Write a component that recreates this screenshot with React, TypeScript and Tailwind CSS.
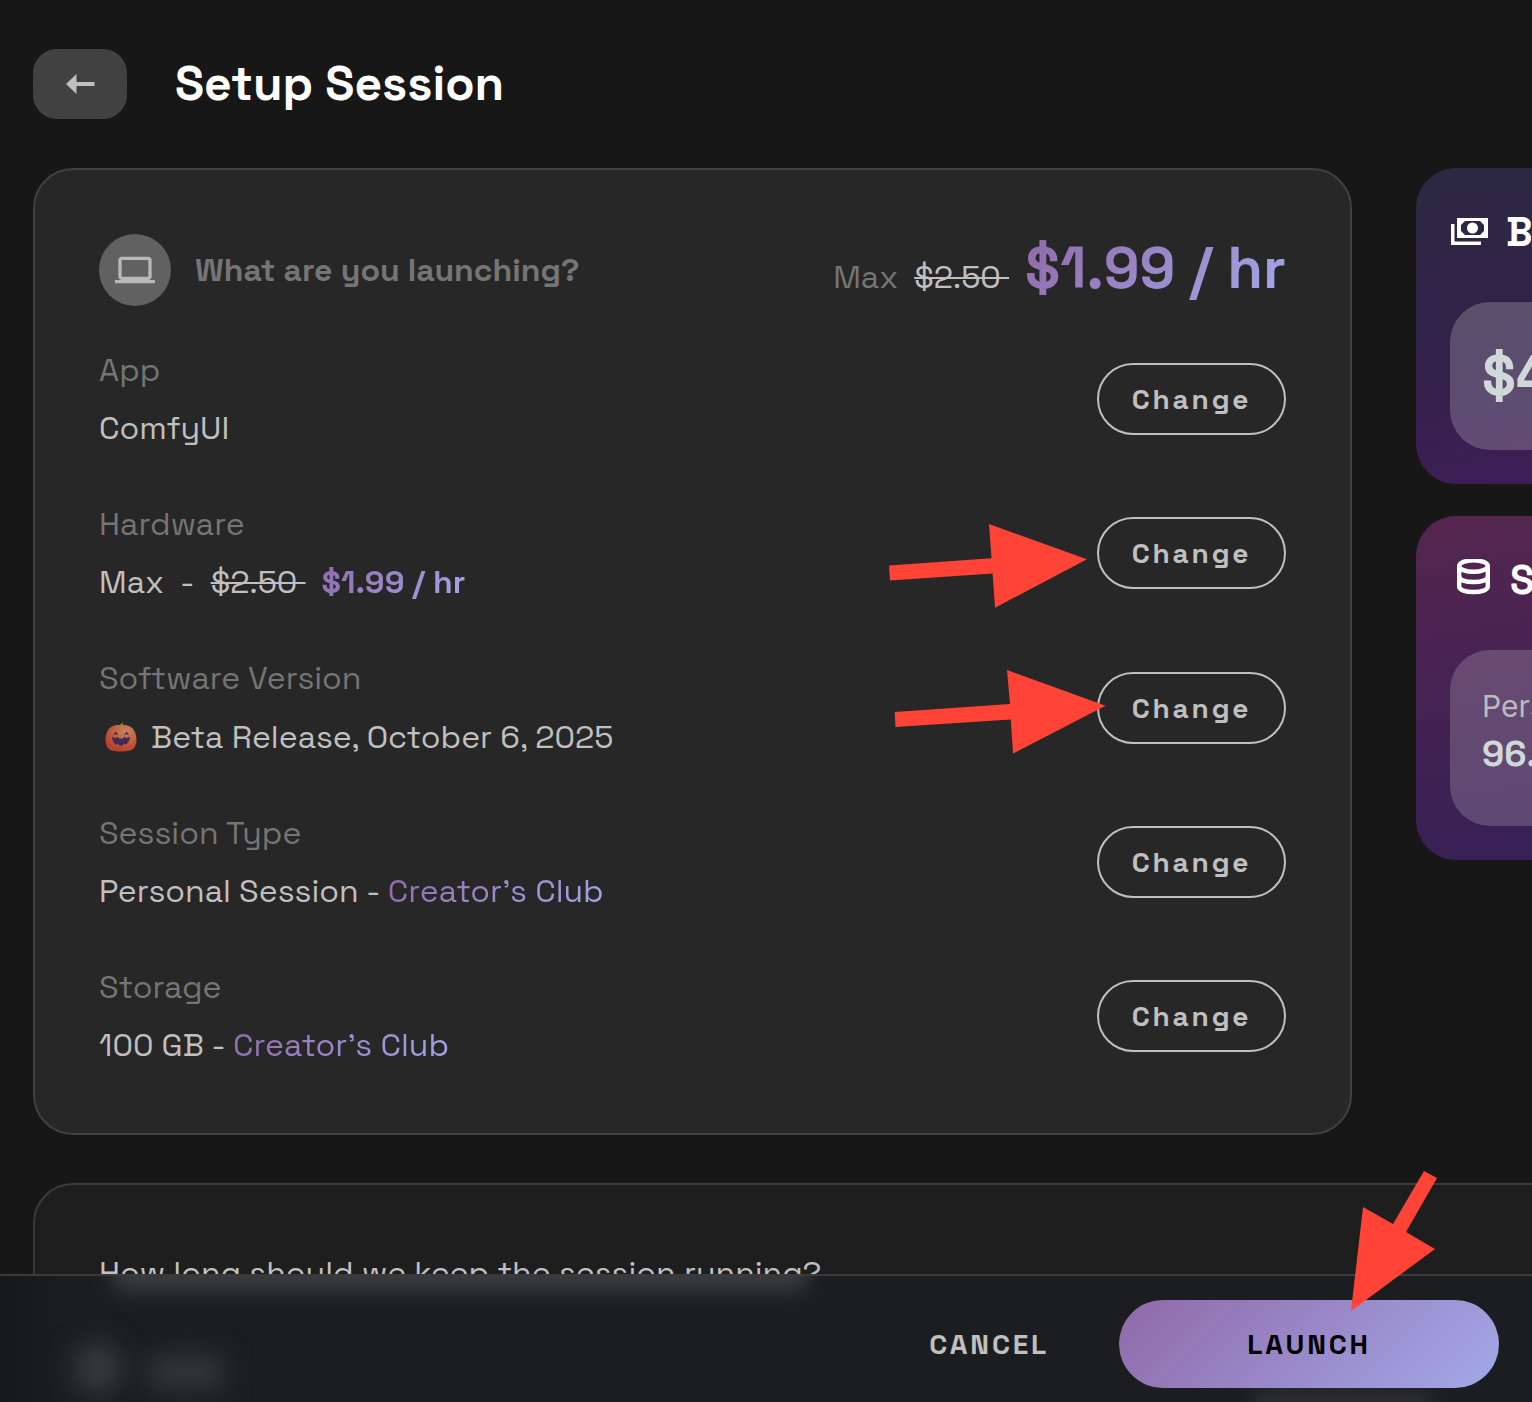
import { MdComputer } from 'react-icons/md';
import type { ReactNode } from 'react';

const gradientText = 'bg-linear-135 from-[#8f69a9] to-[#a2a9e9] bg-clip-text text-transparent';

function Pumpkin() {
  return (
    <svg viewBox="0 0 32 30" className="w-8 h-[30px] shrink-0" aria-hidden="true">
      <defs>
        <radialGradient id="pumpkin" cx="0.65" cy="0.25" r="0.9">
          <stop offset="0" stopColor="#c98460" />
          <stop offset="0.45" stopColor="#bf6040" />
          <stop offset="0.85" stopColor="#b8402e" />
          <stop offset="1" stopColor="#a84b66" />
        </radialGradient>
      </defs>
      <path d="M13 4C14.500 3 16 2 17.800 0L18 4Z" fill="#72863c" />
      <path
        d="M16 3C22 2.600 27 4 29.500 9C32 14 32.500 21 29.500 25.500C27.500 28.800 22 29.500 16 29.500S4.500 28.800 2.500 25.500C-.5 21 0 14 2.500 9C5 4 10 2.600 16 3Z"
        fill="url(#pumpkin)"
      />
      <path d="M8 13L10.800 9.500L13.200 13Q10.600 11.500 8 13ZM19 13L21.500 9.500L24 13Q21.500 11.500 19 13Z" fill="#43285a" />
      <path
        d="M7 14.500L10.500 16.200L12.500 14.800L14.500 16.800H17.500L19.500 14.800L21.500 16.200L25 14.500Q25 20 20.500 22.800L19 21.500L17.500 23.800H14.500L13 21.500L11 22.800Q7 20 7 14.500Z"
        fill="#43285a"
      />
    </svg>
  );
}

function ClubTag() {
  return <span className={gradientText}>Creator’s Club</span>;
}

const rows: { label: string; value: ReactNode; arrow?: ReactNode }[] = [
  { label: 'App', value: 'ComfyUI' },
  {
    label: 'Hardware',
    value: (
      <span className="flex gap-4">
        <span>Max</span>
        <span>-</span>
        <s className="whitespace-pre decoration-2">$2.50 </s>
        <span className={`font-bold ${gradientText}`}>$1.99 / hr</span>
      </span>
    ),
    arrow: (
      <svg
        viewBox="889 524 198 84"
        className="absolute right-[199px] top-6 w-[198px] h-[84px] pointer-events-none"
        aria-hidden="true"
      >
        <path d="M889 565.500L991.500 558.300L989 524L1087 559.300L995 607.700L992.600 573.500L890 580.500Z" fill="#ff4336" />
      </svg>
    ),
  },
  {
    label: 'Software Version',
    value: (
      <span className="flex items-center gap-3.5 h-[49px] pl-1.5">
        <Pumpkin />
        Beta Release, October 6, 2025
      </span>
    ),
    arrow: (
      <svg
        viewBox="894 670 212 84"
        className="absolute right-[180px] top-4 w-[212px] h-[84px] pointer-events-none"
        aria-hidden="true"
      >
        <path d="M894.700 712L1010 704L1007 670L1105.500 705.700L1013 753.500L1010.800 719.500L895.500 727Z" fill="#ff4336" />
      </svg>
    ),
  },
  {
    label: 'Session Type',
    value: (
      <>
        Personal Session - <ClubTag />
      </>
    ),
  },
  {
    label: 'Storage',
    value: (
      <>
        100 GB - <ClubTag />
      </>
    ),
  },
];

function LaunchCard() {
  return (
    <section className="flex-1 min-w-0 rounded-[40px] border-2 border-[#414141] bg-[#272727] p-16">
      <div className="flex items-center justify-between">
        <div className="flex items-center gap-6">
          <span className="flex items-center justify-center w-18 h-18 rounded-full bg-[#616161]">
            <MdComputer className="w-10 h-10 text-[#b8b8b8]" />
          </span>
          <h2 className="text-[32px] leading-12 font-bold text-[#757575]">What are you launching?</h2>
        </div>
        <p className="flex items-baseline gap-4 h-18 text-[32px] text-[#757575]">
          Max
          <s className="whitespace-pre text-[#c0c0c0] decoration-2">$2.50 </s>
          <span className={`text-[58px] leading-17 font-bold ${gradientText}`}>$1.99 / hr</span>
        </p>
      </div>

      <dl className="mt-10 flex flex-col gap-12">
        {rows.map((row) => (
          <div key={row.label} className="relative flex items-center justify-between text-[32px] leading-12">
            <div className="flex flex-col gap-2.5">
              <dt className="text-[#757575]">{row.label}</dt>
              <dd className="text-[#c0c0c0]">{row.value}</dd>
            </div>
            <button
              type="button"
              aria-label={`Change ${row.label}`}
              className="w-[189px] h-18 rounded-full border-2 border-[#c0c0c0] text-[28px] font-bold tracking-widest text-[#c0c0c0]"
            >
              Change
            </button>
            {row.arrow}
          </div>
        ))}
      </dl>
    </section>
  );
}

function Sidebar() {
  return (
    // The side cards are wider than the column and run past the window edge.
    <aside className="w-[116px] shrink-0 flex flex-col gap-8">
      <section className="w-[480px] rounded-[40px] bg-linear-170 from-[#2b2842] via-[#33214a] to-[#431c5c] p-[34px]">
        <h2 className="flex items-center gap-3 h-[62px] text-[40px] font-bold text-white">
          <svg viewBox="0 0 44 44" className="w-11 h-11" fill="currentColor" aria-hidden="true">
            <path fillRule="evenodd" d="M7 7H38V27H7ZM15 10L11 14V20L15 24H30L34 20V14L30 10Z" />
            <circle cx="22.500" cy="17" r="5.500" />
            <path d="M1 13H4.500V30.500H31V34H1Z" />
          </svg>
          Balance
        </h2>
        <div className="mt-[38px] flex items-center h-[148px] rounded-[40px] bg-white/20 px-8">
          <strong className="text-[56px] font-bold text-[#d0d8da]">$4</strong>
        </div>
      </section>

      <section className="w-[480px] rounded-[40px] bg-linear-170 from-[#55264f] via-[#432253] to-[#301f56] p-[34px]">
        <h2 className="flex items-center gap-3 h-[62px] text-[40px] font-bold text-white">
          <svg
            viewBox="0 0 48 44"
            className="w-12 h-11"
            fill="none"
            stroke="currentColor"
            strokeWidth="4.400"
            aria-hidden="true"
          >
            <ellipse cx="23.500" cy="7" rx="14.300" ry="5.800" />
            <path d="M9.200 7V27.500C9.200 31 15.500 33 23.500 33S37.800 31 37.800 27.500V7" />
            <path d="M9.200 17.500C9.200 21 15.500 23 23.500 23S37.800 21 37.800 17.500" />
          </svg>
          Storage
        </h2>
        <div className="mt-[38px] h-[176px] rounded-[40px] bg-white/18 p-8">
          <p className="font-[Inter,sans-serif] text-[30px] leading-12 text-[#bcbcbc]">Personal</p>
          <strong className="block text-[36px] leading-12 font-bold text-[#d0d8da]">96.</strong>
        </div>
      </section>
    </aside>
  );
}

function FooterHaze() {
  return (
    <div className="absolute inset-0 overflow-hidden pointer-events-none" aria-hidden="true">
      <div className="absolute left-[110px] -top-5 w-[700px] h-9 rounded-full bg-[#3a3b3f] blur-[10px]" />
      <div className="absolute left-[74px] top-[68px] w-12 h-12 rounded-full bg-[#3c3d41] blur-[14px]" />
      <div className="absolute left-[146px] top-[80px] w-20 h-8 rounded-full bg-[#38393d] blur-[14px]" />
      <div className="absolute right-[100px] -bottom-3 w-[180px] h-6 rounded-full bg-[#303135] blur-[10px]" />
    </div>
  );
}

export default function App() {
  return (
    <div className="h-screen overflow-hidden bg-[#171717] font-['Space_Grotesk',Inter,sans-serif]">
      <main className="h-full overflow-x-hidden overflow-y-auto [scrollbar-width:none] pl-[33px] pt-[49px]">
        <header className="mb-[49px] flex items-center gap-12">
          <button
            type="button"
            aria-label="Back"
            className="flex items-center justify-center w-[94px] h-[70px] rounded-3xl bg-[#414141]"
          >
            <svg viewBox="0 0 30 20" className="w-[30px] h-5" fill="#c0c0c0" aria-hidden="true">
              <path d="M1 10L11.500 0V8H29.500V12H11.500V20Z" />
            </svg>
          </button>
          <h1 className="text-[48px] leading-none font-bold text-white">Setup Session</h1>
        </header>

        <div className="flex items-start gap-16">
          <LaunchCard />
          <Sidebar />
        </div>

        <section className="mt-12 -mr-16 h-[480px] rounded-[40px] border-2 border-[#3a3a3a] bg-[#1e1e1e] p-16">
          <p className="text-[32px] leading-12 text-[#c0c0c0]">How long should we keep the session running?</p>
        </section>
      </main>

      <footer className="fixed inset-x-0 bottom-0 flex justify-end gap-[70px] border-t-2 border-[#393a3d] bg-linear-to-r from-[#16181c] to-[#1c1d21] to-[60px] px-[33px] pt-6 pb-3.5">
        <FooterHaze />
        <button type="button" className="relative text-[28px] font-bold tracking-widest text-[#c0c0c0]">
          CANCEL
        </button>
        <button
          type="button"
          className="relative w-[380px] h-22 rounded-full bg-linear-135 from-[#8f69a9] to-[#a2a9e9] text-[28px] font-bold tracking-widest text-black"
        >
          LAUNCH
        </button>
        <svg
          viewBox="1351 1171 86 140"
          className="absolute right-[95px] bottom-[91px] w-[86px] h-[140px] pointer-events-none"
          aria-hidden="true"
        >
          <path d="M1424 1171L1437 1178L1406 1232L1435 1249L1351 1311L1363 1207L1393 1224Z" fill="#ff4336" />
        </svg>
      </footer>
    </div>
  );
}
